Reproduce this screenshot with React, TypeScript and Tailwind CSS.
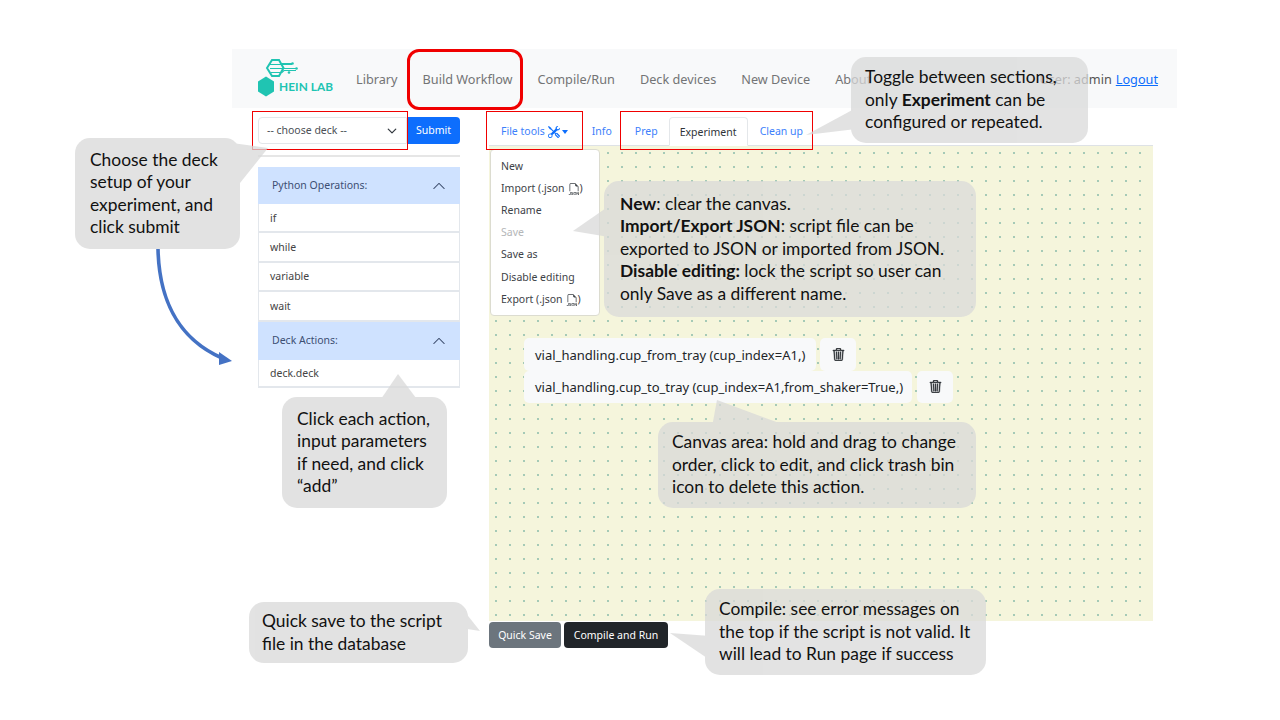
import React from "react";
import { BsTools, BsFiletypeJson, BsTrash3 } from "react-icons/bs";

const ui = "font-['Noto_Sans','Open_Sans',sans-serif]";

function Callout({ className, tail, children }: { className: string; tail: string; children: React.ReactNode }) {
  return (
    <div className={"absolute z-20 " + className}>
      <div className="absolute inset-0 opacity-75">
        <div className="absolute inset-0 rounded-[15px] bg-[#d9d9d9]" />
        <svg className="absolute inset-0 h-full w-full overflow-visible">
          <polygon points={tail} fill="#d9d9d9" />
        </svg>
      </div>
      <div className="relative flex h-full items-center whitespace-nowrap font-['Lato',sans-serif] text-[17.4px] leading-[22.5px] text-[#111]">
        <div>{children}</div>
      </div>
    </div>
  );
}

function Logo() {
  return (
    <div className="relative h-[40px] w-[75px] shrink-0">
      <svg width="75" height="40" viewBox="0 0 75 40" className="absolute left-0 top-0">
        <polygon points="8,17.5 16,22.5 16,32.5 8,37.5 0,32.5 0,22.5" fill="#20c4b2" />
        <path d="M9 9 L14 1 L21 1 L25.5 9 L21 17 L14 17 Z" fill="none" stroke="#20c4b2" strokeWidth="2" />
        <path d="M12 5.5 H34 M12 9.5 H38 M13 13.5 H24 L26 11.5 H38 M22 4.5 H34" fill="none" stroke="#20c4b2" strokeWidth="1.2" />
        <circle cx="34.5" cy="4.5" r="1.3" fill="#20c4b2" />
        <circle cx="38.5" cy="9.5" r="1.3" fill="#20c4b2" />
        <circle cx="31" cy="13.5" r="1.3" fill="#20c4b2" />
      </svg>
      <span className="absolute left-[21px] top-[20px] whitespace-nowrap font-['Lato',sans-serif] text-[11.8px] font-bold leading-[16px] tracking-[0.1px] text-[#20c4b2]">
        HEIN LAB
      </span>
    </div>
  );
}

function Chevron() {
  return (
    <svg width="14" height="14" viewBox="0 0 16 16" fill="#3a4a6b">
      <path fillRule="evenodd" d="M1.646 11.354a.5.5 0 0 0 .708 0L8 5.707l5.646 5.647a.5.5 0 0 0 .708-.708l-6-6a.5.5 0 0 0-.708 0l-6 6a.5.5 0 0 0 0 .708z" />
    </svg>
  );
}

function AccHeader({ label, h }: { label: string; h: string }) {
  return (
    <div className={"flex items-center justify-between bg-[#cfe2ff] pl-[14px] pr-[14px] text-[#3d4f73] " + h}>
      <span>{label}</span>
      <Chevron />
    </div>
  );
}

function AccItem({ label, h }: { label: string; h: string }) {
  return (
    <div className={"flex items-center border-x border-b-2 border-[#e3e7ec] bg-white pl-[11px] pt-[2px] text-[#444] " + h}>{label}</div>
  );
}

function ActionRow({ label, w, gap }: { label: string; w: string; gap: string }) {
  return (
    <div className="flex h-[32.5px] items-center">
      <div className={"flex h-full items-center rounded-[5px] bg-[#f8f9fa] pl-[11px] pt-[2px] text-[13px] text-[#212529] " + w}>{label}</div>
      <div className={"flex h-full w-[36px] items-center justify-center rounded-[5px] bg-[#f8f9fa] text-[#212529] " + gap}>
        <BsTrash3 size={13} strokeWidth={0.5} stroke="currentColor" />
      </div>
    </div>
  );
}

function MenuItem({ children, muted }: { children: React.ReactNode; muted?: boolean }) {
  return (
    <div className={"flex h-[22.2px] items-center pl-[10px] pt-px " + (muted ? "text-[#b4b6b8]" : "text-[#3d4247]")}>{children}</div>
  );
}

export default function App() {
  return (
    <div className={"relative h-[720px] w-[1280px] overflow-hidden bg-white pt-[49px] " + ui}>
      <nav className="ml-[232px] flex h-[59px] w-[945px] items-center bg-[#f8f9fa] pl-[26px] pr-[19px] text-[12.7px] text-[#737475]">
        <Logo />
        <div className="ml-[23px] flex gap-[25px] pt-[3px]">
          <span>Library</span>
          <span>Build Workflow</span>
          <span>Compile/Run</span>
          <span>Deck devices</span>
          <span>New Device</span>
          <span>About</span>
        </div>
        <div className="ml-auto flex gap-[4px] pt-[3px]">
          <span className="text-[#555]">User: admin</span>
          <span className="text-[#0d6efd] underline">Logout</span>
        </div>
      </nav>

      <div className="flex pl-[258px] text-[10.5px]">
        <aside className="w-[202px] pt-[9px]">
          <div className="flex h-[27px]">
            <div className="flex w-[149px] items-center justify-between rounded-l-[4px] border border-[#e3e6ea] bg-white pl-[8px] pr-[9px] pt-px text-[#4b5056]">
              <span>-- choose deck --</span>
              <svg width="10" height="10" viewBox="0 0 16 16" fill="none" stroke="#343a40" strokeWidth="2" strokeLinecap="round" strokeLinejoin="round">
                <path d="M2 5l6 6 6-6" />
              </svg>
            </div>
            <div className="flex w-[53px] items-center justify-center rounded-r-[4px] bg-[#0d6efd] text-white">Submit</div>
          </div>
          <div className="mt-[11px] h-[2px] bg-[#e6e6e6]" />
          <div className="mt-[10px]">
            <AccHeader label="Python Operations:" h="h-[37px]" />
            <AccItem label="if" h="h-[29px]" />
            <AccItem label="while" h="h-[29.5px]" />
            <AccItem label="variable" h="h-[29.5px]" />
            <AccItem label="wait" h="h-[29.5px]" />
            <AccHeader label="Deck Actions:" h="h-[38px]" />
            <AccItem label="deck.deck" h="h-[28.5px]" />
          </div>
        </aside>

        <main className="relative ml-[29px] w-[664px]">
          <div className="flex h-[38px] items-end border-b border-[#dee2e6] pl-[12px]">
            <div className="flex h-[29px] items-center pt-[3px] text-[#3d7ffb]">
              <span>File tools</span>
              <BsTools size={12} className="ml-[3px] text-[#0d6efd]" />
              <span className="ml-[2px] h-0 w-0 border-x-[3px] border-t-[4px] border-x-transparent border-t-[#0d6efd]" />
            </div>
            <div className="ml-[24px] flex h-[29px] items-center pt-[3px] text-[#3d7ffb]">Info</div>
            <div className="ml-[23px] flex h-[29px] items-center pt-[3px] text-[#3d7ffb]">Prep</div>
            <div className="relative top-px ml-[11px] flex h-[29px] w-[79px] items-center justify-center rounded-t-[4px] border border-[#e4e7ea] border-b-white bg-white pt-[3px] text-[#2f3438]">
              Experiment
            </div>
            <div className="ml-[12px] flex h-[29px] items-center pt-[3px] text-[#3d7ffb]">Clean up</div>
          </div>

          <div className="h-[475px] bg-[#f5f5dc] bg-[radial-gradient(circle,#a3c8b6_0.7px,transparent_1.1px)] bg-[length:14px_14px] pl-[35px] pt-[192px]">
            <ActionRow label="vial_handling.cup_from_tray (cup_index=A1,)" w="w-[292px]" gap="ml-[4px]" />
            <ActionRow label="vial_handling.cup_to_tray (cup_index=A1,from_shaker=True,)" w="w-[388px]" gap="ml-[5px]" />
          </div>

          <div className="flex gap-[3px] pt-px">
            <div className="flex h-[26px] w-[72px] items-center justify-center rounded-[4px] bg-[#6c757d] pt-px text-white">Quick Save</div>
            <div className="flex h-[26px] w-[104px] items-center justify-center rounded-[4px] bg-[#212529] pt-px text-white">Compile and Run</div>
          </div>

          <div className="absolute left-[1px] top-[41px] z-10 h-[167px] w-[110px] rounded-[4px] border border-[#dcdcd0] bg-white pt-[5px]">
            <MenuItem>New</MenuItem>
            <MenuItem>
              Import (.json <BsFiletypeJson size={12} className="ml-[3px]" />)
            </MenuItem>
            <MenuItem>Rename</MenuItem>
            <MenuItem muted>Save</MenuItem>
            <MenuItem>Save as</MenuItem>
            <MenuItem>Disable editing</MenuItem>
            <MenuItem>
              Export (.json <BsFiletypeJson size={12} className="ml-[3px]" />)
            </MenuItem>
          </div>
        </main>
      </div>

      <div className="absolute left-[252px] top-[111px] z-10 h-[39px] w-[156px] border border-[#f00000]" />
      <div className="absolute left-[486px] top-[111px] z-10 h-[39px] w-[97px] border border-[#f00000]" />
      <div className="absolute left-[620px] top-[111px] z-10 h-[39px] w-[193px] border border-[#f00000]" />
      <div className="absolute left-[407px] top-[49px] z-10 h-[61px] w-[116px] rounded-[12px] border-[3px] border-[#f00000]" />

      <svg className="absolute left-0 top-0 z-10" width="300" height="400" fill="none">
        <path d="M158 249 C159 296 176 338 222 358" stroke="#4472c4" strokeWidth="3.6" />
        <polygon points="219,352 232,361 219,365" fill="#4472c4" />
      </svg>

      <Callout className="left-[851px] top-[57px] h-[86px] w-[237px] pl-[14px]" tail="5,51 -45,78 5,72">
        Toggle between sections,
        <br />
        only <b>Experiment</b> can be
        <br />
        configured or repeated.
      </Callout>
      <Callout className="left-[75px] top-[138px] h-[111px] w-[165px] pl-[15px]" tail="157,5 193,10 165,45 157,45">
        Choose the deck
        <br />
        setup of your
        <br />
        experiment, and
        <br />
        click submit
      </Callout>
      <Callout className="left-[604px] top-[181px] h-[136px] w-[372px] pl-[16px]" tail="5,25 -31,50 5,56">
        <b>New</b>: clear the canvas.
        <br />
        <b>Import/Export JSON</b>: script file can be
        <br />
        exported to JSON or imported from JSON.
        <br />
        <b>Disable editing:</b> lock the script so user can
        <br />
        only Save as a different name.
      </Callout>
      <Callout className="left-[658px] top-[422px] h-[86px] w-[318px] pl-[14px]" tail="54,5 59,-22 132,5">
        Canvas area: hold and drag to change
        <br />
        order, click to edit, and click trash bin
        <br />
        icon to delete this action.
      </Callout>
      <Callout className="left-[282px] top-[397px] h-[111px] w-[165px] pl-[15px]" tail="97,5 116,-23 137,5">
        Click each action,
        <br />
        input parameters
        <br />
        if need, and click
        <br />
        “add”
      </Callout>
      <Callout className="left-[249px] top-[602px] h-[61px] w-[219px] pl-[13px]" tail="212,5 231,29 212,26">
        Quick save to the script
        <br />
        file in the database
      </Callout>
      <Callout className="left-[705px] top-[589px] h-[86px] w-[281px] pl-[14px]" tail="5,47 -35,44 5,71">
        Compile: see error messages on
        <br />
        the top if the script is not valid. It
        <br />
        will lead to Run page if success
      </Callout>
    </div>
  );
}
